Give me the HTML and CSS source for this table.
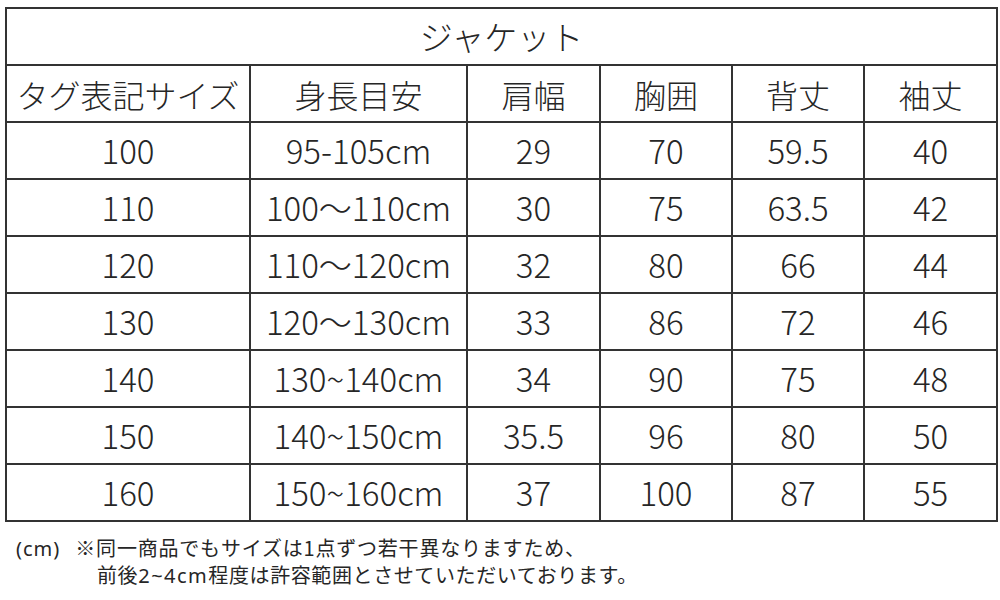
FILE: index.html
```html
<!DOCTYPE html>
<html lang="ja">
<head>
<meta charset="utf-8">
<link rel="stylesheet" href="styles.css">
</head>
<body>
<div class="page">
  <table class="size-table">
    <colgroup>
      <col class="c1"><col class="c2"><col class="c3"><col class="c4"><col class="c5"><col class="c6">
    </colgroup>
    <tr class="title-row"><td colspan="6">ジャケット</td></tr>
    <tr class="head-row"><td>タグ表記サイズ</td><td>身長目安</td><td>肩幅</td><td>胸囲</td><td>背丈</td><td>袖丈</td></tr>
    <tr><td>100</td><td>95-105cm</td><td>29</td><td>70</td><td>59.5</td><td>40</td></tr>
    <tr><td>110</td><td>100～110cm</td><td>30</td><td>75</td><td>63.5</td><td>42</td></tr>
    <tr><td>120</td><td>110～120cm</td><td>32</td><td>80</td><td>66</td><td>44</td></tr>
    <tr><td>130</td><td>120～130cm</td><td>33</td><td>86</td><td>72</td><td>46</td></tr>
    <tr><td>140</td><td>130~140cm</td><td>34</td><td>90</td><td>75</td><td>48</td></tr>
    <tr><td>150</td><td>140~150cm</td><td>35.5</td><td>96</td><td>80</td><td>50</td></tr>
    <tr><td>160</td><td>150~160cm</td><td>37</td><td>100</td><td>87</td><td>55</td></tr>
  </table>
  <div class="note">
    <p class="note-line"><span class="unit">(cm)</span>※同一商品でもサイズは1点ずつ若干異なりますため、</p>
    <p class="note-line indent">前後<span class="latin">2~4cm</span>程度は許容範囲とさせていただいております。</p>
  </div>
</div>
</body>
</html>
```
FILE: styles.css
```css
html, body {
  margin: 0;
  padding: 0;
  background: #ffffff;
}
body {
  font-family: "Noto Sans CJK JP", "Noto Sans", sans-serif;
  color: #262626;
}
.page {
  width: 1000px;
  height: 600px;
  padding: 7px 0 0 5px;
  box-sizing: border-box;
  overflow: hidden;
}
.size-table {
  border-collapse: collapse;
  table-layout: fixed;
  width: 991px;
}
.c1 { width: 244px; }
.c2 { width: 217px; }
.c3 { width: 133px; }
.c4 { width: 132px; }
.c5 { width: 132px; }
.c6 { width: 133px; }
.size-table td {
  border: 2px solid #333333;
  height: 55px;
  padding: 0;
  text-align: center;
  vertical-align: middle;
  font-size: 33px;
  font-weight: 300;
  line-height: 1;
  white-space: nowrap;
}
.head-row td {
  font-size: 32px;
}
.note {
  margin-top: 13px;
  padding-left: 11px;
}
.note-line {
  margin: 0;
  font-size: 20px;
  font-weight: 400;
  line-height: 26px;
  letter-spacing: 0.8px;
  white-space: nowrap;
}
.unit {
  font-family: "Noto Sans", sans-serif;
  letter-spacing: 1px;
  margin-right: 15px;
}
.latin {
  font-family: "Noto Sans", sans-serif;
  letter-spacing: 1.5px;
}
.indent {
  padding-left: 81px;
  letter-spacing: 0.6px;
}
```
